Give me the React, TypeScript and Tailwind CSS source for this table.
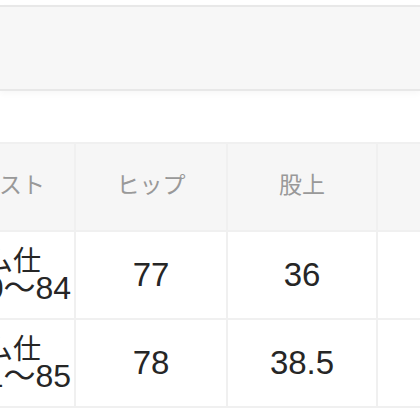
const font = { fontFamily: '"Liberation Sans", "Noto Sans CJK JP", sans-serif' };

const headers = ["ウエスト", "ヒップ", "股上", "股下"];

const rows = [
  { waist: ["ゴム仕", "様 60〜84"], cells: ["77", "36", "74"] },
  { waist: ["ゴム仕", "様 61〜85"], cells: ["78", "38.5", "74"] },
];

export default function App() {
  return (
    <div className="h-[420px] w-[420px] overflow-hidden bg-white pt-[5px]" style={font}>
      {/* top bar */}
      <div className="h-[86px] border-y-2 border-[#e8e8e8] bg-[#f7f7f7] shadow-[0_3px_6px_rgba(0,0,0,0.03)]" />

      {/* size table */}
      <div className="mt-[51px] -ml-[78px] grid w-[640px] grid-cols-[150px_150px_148px_150px] gap-[2px] bg-[#f0f0f0] p-[2px]">
        {headers.map((h) => (
          <div
            key={h}
            className="flex h-[86px] items-center justify-center bg-[#f6f6f6] pb-[4px] text-[23px] text-[#999]"
          >
            {h}
          </div>
        ))}

        {rows.map((r, i) => (
          <>
            <div key={`w${i}`} className="flex h-[86px] flex-col items-center justify-center bg-white text-[#262626]">
              <span className="text-[28px] leading-[25px]">{r.waist[0]}</span>
              <span className="text-[32px] leading-[28px]">{r.waist[1]}</span>
            </div>
            {r.cells.map((c, j) => (
              <div
                key={`c${i}${j}`}
                className="flex h-[86px] items-center justify-center bg-white text-[33px] text-[#262626]"
              >
                {c}
              </div>
            ))}
          </>
        ))}
      </div>
    </div>
  );
}
